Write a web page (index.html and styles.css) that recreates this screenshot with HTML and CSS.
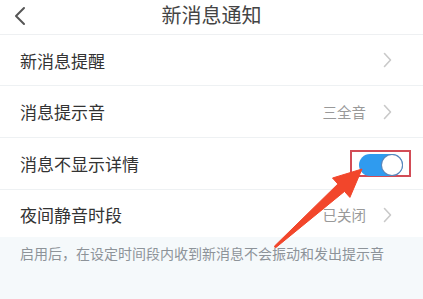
FILE: index.html
```html
<!DOCTYPE html>
<html lang="zh-CN">
<head>
    <meta charset="UTF-8">
    <meta name="viewport" content="width=device-width, initial-scale=1.0">
    <title>新消息通知</title>
    <link rel="stylesheet" href="styles.css">
</head>
<body>
    <div class="page">
        <div class="header">
            <svg class="back" width="12" height="20" viewBox="0 0 12 20">
                <path d="M10 2 L2 10 L10 18" fill="none" stroke="#555" stroke-width="2" stroke-linecap="round" stroke-linejoin="round"/>
            </svg>
            <h1 class="title">新消息通知</h1>
            <span></span>
        </div>

        <div class="list">
            <div class="row">
                <span class="label">新消息提醒</span>
                <svg class="chevron" width="9" height="16" viewBox="0 0 9 16">
                    <path d="M1.5 1.5 L7.5 8 L1.5 14.5" fill="none" stroke="#c9c9c9" stroke-width="1.6" stroke-linecap="round" stroke-linejoin="round"/>
                </svg>
            </div>
            <div class="row">
                <span class="label">消息提示音</span>
                <span class="value">三全音</span>
                <svg class="chevron" width="9" height="16" viewBox="0 0 9 16">
                    <path d="M1.5 1.5 L7.5 8 L1.5 14.5" fill="none" stroke="#c9c9c9" stroke-width="1.6" stroke-linecap="round" stroke-linejoin="round"/>
                </svg>
            </div>
            <div class="row row-switch">
                <span class="label">消息不显示详情</span>
                <div class="mark">
                    <label class="switch">
                        <input type="checkbox" checked>
                        <span class="slider"></span>
                    </label>
                </div>
            </div>
            <div class="row row-last">
                <span class="label">夜间静音时段</span>
                <span class="value">已关闭</span>
                <svg class="chevron" width="9" height="16" viewBox="0 0 9 16">
                    <path d="M1.5 1.5 L7.5 8 L1.5 14.5" fill="none" stroke="#c9c9c9" stroke-width="1.6" stroke-linecap="round" stroke-linejoin="round"/>
                </svg>
            </div>
        </div>

        <p class="note">启用后，在设定时间段内收到新消息不会振动和发出提示音</p>

        <!-- annotation arrow over the page -->
        <svg class="arrow" width="423" height="299" viewBox="0 0 423 299">
            <polygon points="274.3,246.3 337.9,184 332.5,178 362,169 349.9,197.4 344.5,191.4 275.7,247.7" fill="#f2462b" stroke="#f2462b" stroke-width="1" stroke-linejoin="round"/>
        </svg>
    </div>
</body>
</html>
```

FILE: styles.css
```css
body {
    margin: 0;
    font-family: "Noto Sans CJK SC", "Noto Sans", sans-serif;
    background-color: #f5f9fb;
}

.page {
    position: relative;
    width: 423px;
    height: 299px;
    overflow: hidden;
}

.header {
    display: grid;
    grid-template-columns: 40px 1fr 40px;
    align-items: center;
    height: 34px;
    background-color: #fff;
    border-bottom: 1px solid #eef0f2;
}

.back {
    margin-left: 14px;
    margin-top: -6px;
}

.title {
    margin: 0 0 8px 0;
    text-align: center;
    font-size: 20px;
    font-weight: normal;
    color: #444;
}

.list {
    background-color: #fff;
}

.row {
    display: flex;
    align-items: center;
    height: 51px;
    padding: 0 31px 0 20px;
    border-bottom: 1px solid #eef1f3;
}

.row:first-child {
    height: 50px;
}

.row-last {
    height: 45px;
    padding-top: 2px;
    border-bottom: none;
}

.label {
    flex: 1;
    font-size: 17px;
    color: #333;
}

.value {
    font-size: 14.5px;
    color: #999;
    margin-right: 17px;
}

.row-switch {
    padding-right: 12px;
}

.mark {
    display: flex;
    align-items: center;
    justify-content: center;
    width: 57px;
    height: 23px;
    border: 2px solid #d24c56;
}

.switch {
    position: relative;
    display: inline-block;
    width: 44px;
    height: 22px;
    margin-top: 3px;
}

.switch input {
    display: none;
}

.slider {
    position: absolute;
    top: 0;
    left: 0;
    right: 0;
    bottom: 0;
    background-color: #2f9bef;
    border-radius: 11px;
}

.slider:before {
    position: absolute;
    content: "";
    width: 20px;
    height: 20px;
    right: 1px;
    top: 1px;
    background-color: #fff;
    border-radius: 50%;
    box-shadow: 0 0 0 1px #5d86b8;
}

.note {
    margin: 0;
    padding: 6px 20px;
    font-size: 14px;
    color: #8d9399;
}

.arrow {
    position: absolute;
    top: 0;
    left: 0;
}
```
